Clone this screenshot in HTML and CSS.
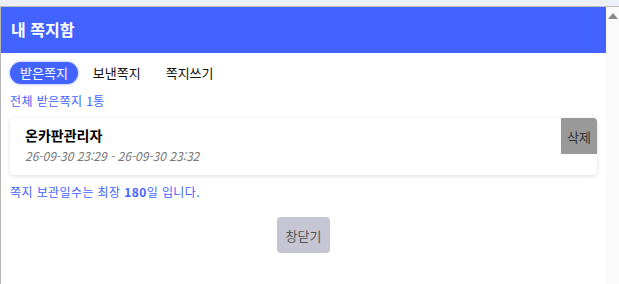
FILE: index.html
```html
<!DOCTYPE html>
<html lang="ko">
<head>
    <meta charset="UTF-8">
    <title>내 쪽지함</title>
    <link rel="stylesheet" href="styles.css">
</head>
<body>
    <div class="topbar"></div>
    <div class="window">
        <div class="main">
            <div class="header">내 쪽지함</div>
            <div class="content">
                <div class="tabs">
                    <a class="tab active">받은쪽지</a>
                    <a class="tab">보낸쪽지</a>
                    <a class="tab">쪽지쓰기</a>
                </div>
                <div class="total">전체 받은쪽지 1통</div>
                <div class="card">
                    <div class="card-body">
                        <div class="sender">온카판관리자</div>
                        <div class="date">26-09-30 23:29 - 26-09-30 23:32</div>
                    </div>
                    <button class="del-btn">삭제</button>
                </div>
                <div class="notice">쪽지 보관일수는 최장 <b>180</b>일 입니다.</div>
                <div class="actions">
                    <button class="close-btn">창닫기</button>
                </div>
            </div>
        </div>
        <div class="scrollbar">
            <div class="arrow"></div>
        </div>
    </div>
</body>
</html>
```

FILE: styles.css
```css
body {
    margin: 0;
    font-family: "Noto Sans CJK KR", "Noto Sans", sans-serif;
    font-size: 13px;
    background-color: #fff;
    overflow: hidden;
}

.topbar {
    height: 6px;
    background-color: #eceff8;
    border-bottom: 1px solid #bdbdbd;
}

.window {
    display: flex;
    height: 277px;
}

.main {
    flex: 1;
    border-left: 1px solid #b5b5b5;
}

.header {
    height: 46px;
    line-height: 44px;
    padding-left: 10px;
    background-color: #4263ff;
    color: #fff;
    font-size: 16px;
    font-weight: bold;
}

.content {
    padding: 9px 9px 0 9px;
}

.tabs {
    display: flex;
    align-items: center;
}

.tab {
    display: block;
    height: 22px;
    line-height: 21px;
    padding: 0 10px;
    margin-right: 5px;
    border-radius: 11px;
    color: #111;
    font-size: 13px;
}

.tab.active {
    background-color: #4263ff;
    color: #fff;
    box-shadow: 0 0 3px rgba(66, 99, 255, 0.6);
}

.total {
    margin-top: 9px;
    color: #4263ff;
    font-size: 12px;
    line-height: 16px;
    letter-spacing: 0.4px;
}

.card {
    display: flex;
    justify-content: space-between;
    margin-top: 9px;
    height: 57px;
    background-color: #fff;
    border-radius: 4px;
    box-shadow: 0 1px 4px rgba(0, 0, 0, 0.15);
}

.card-body {
    padding: 7px 0 0 15px;
}

.sender {
    font-size: 14px;
    font-weight: bold;
    color: #000;
    line-height: 20px;
}

.date {
    margin-top: 3px;
    font-size: 12px;
    font-style: italic;
    color: #777;
    line-height: 16px;
}

.del-btn {
    width: 36px;
    height: 36px;
    padding: 0;
    border: none;
    background-color: #999;
    color: #333;
    font-family: inherit;
    font-size: 13px;
    border-top-right-radius: 4px;
}

.notice {
    margin-top: 9px;
    color: #4263ff;
    font-size: 12px;
    line-height: 16px;
    letter-spacing: 0.4px;
}

.notice b {
    color: #4263ff;
}

.actions {
    display: flex;
    justify-content: center;
    margin-top: 17px;
}

.close-btn {
    width: 53px;
    height: 36px;
    padding: 0;
    border: none;
    border-radius: 4px;
    background-color: #c5c5d3;
    color: #555;
    font-family: inherit;
    font-size: 13px;
}

.scrollbar {
    width: 13px;
    background-color: #fafafa;
}

.arrow {
    width: 0;
    height: 0;
    margin: 6px auto 0;
    border-left: 5px solid transparent;
    border-right: 5px solid transparent;
    border-bottom: 6px solid #888;
}
```
